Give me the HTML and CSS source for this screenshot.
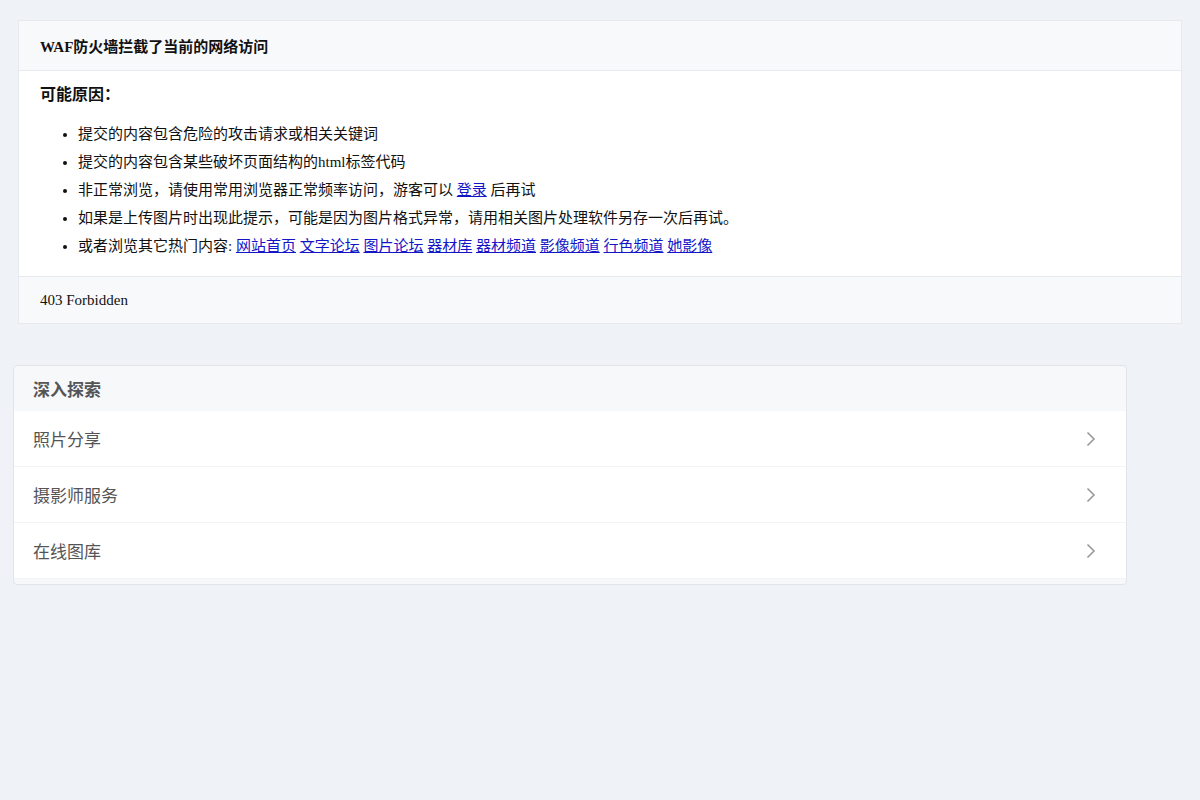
FILE: index.html
```html
<!DOCTYPE html>
<html>
<head>
  <meta charset="utf-8">
  <title>403 Forbidden</title>
  <link rel="stylesheet" href="styles.css">
</head>
<body>

  <!-- WAF block notice -->
  <div class="waf-card">
    <div class="waf-head">WAF防火墙拦截了当前的网络访问</div>
    <div class="waf-body">
      <p class="reason-title">可能原因：</p>
      <ul class="reasons">
        <li>提交的内容包含危险的攻击请求或相关关键词</li>
        <li>提交的内容包含某些破坏页面结构的html标签代码</li>
        <li>非正常浏览，请使用常用浏览器正常频率访问，游客可以 <a href="#">登录</a> 后再试</li>
        <li>如果是上传图片时出现此提示，可能是因为图片格式异常，请用相关图片处理软件另存一次后再试。</li>
        <li>或者浏览其它热门内容: <a href="#">网站首页</a> <a href="#">文字论坛</a> <a href="#">图片论坛</a> <a href="#">器材库</a> <a href="#">器材频道</a> <a href="#">影像频道</a> <a href="#">行色频道</a> <a href="#">她影像</a></li>
      </ul>
    </div>
    <div class="waf-foot">403 Forbidden</div>
  </div>

  <!-- explore links -->
  <div class="explore">
    <div class="explore-head">深入探索</div>
    <a class="explore-row" href="#">
      <span>照片分享</span>
      <svg class="chev" width="10" height="16" viewBox="0 0 10 16"><polyline points="1.5,1.5 8,8 1.5,14.5" fill="none" stroke="#999" stroke-width="1.6"/></svg>
    </a>
    <a class="explore-row" href="#">
      <span>摄影师服务</span>
      <svg class="chev" width="10" height="16" viewBox="0 0 10 16"><polyline points="1.5,1.5 8,8 1.5,14.5" fill="none" stroke="#999" stroke-width="1.6"/></svg>
    </a>
    <a class="explore-row" href="#">
      <span>在线图库</span>
      <svg class="chev" width="10" height="16" viewBox="0 0 10 16"><polyline points="1.5,1.5 8,8 1.5,14.5" fill="none" stroke="#999" stroke-width="1.6"/></svg>
    </a>
  </div>

</body>
</html>
```

FILE: styles.css
```css
body {
  margin: 0;
  padding: 20px 0 0;
  background-color: #eff3f8;
  font-family: "Liberation Serif", "Noto Sans CJK SC", serif;
  color: #111;
}

.waf-card {
  margin: 0 18px;
  background: #fff;
  border: 1px solid #e6e9ee;
}
.waf-head {
  height: 49px;
  padding: 0 21px;
  display: flex;
  align-items: center;
  background: #f8f9fb;
  border-bottom: 1px solid #e6e9ee;
  font-size: 15px;
  font-weight: bold;
}
.waf-body {
  padding: 12px 21px 16px;
}
.reason-title {
  margin: 0;
  line-height: 24px;
  font-size: 16px;
  font-weight: bold;
}
.reasons {
  margin: 13px 0 0;
  padding-left: 38px;
  font-size: 15px;
  line-height: 28px;
}
.reasons a {
  color: #1515c8;
}
.waf-foot {
  height: 46px;
  padding: 0 21px;
  display: flex;
  align-items: center;
  background: #f8f9fb;
  border-top: 1px solid #e6e9ee;
  font-size: 15px;
}

.explore {
  width: 1112px;
  margin: 41px 0 0 13px;
  padding-bottom: 5px;
  background: #f6f8fa;
  border: 1px solid #e1e5ea;
  border-radius: 4px;
  font-family: "Liberation Sans", "Noto Sans CJK SC", sans-serif;
  color: #555;
}
.explore-head {
  height: 45px;
  padding: 0 19px;
  display: flex;
  align-items: center;
  font-size: 17px;
  font-weight: bold;
}
.explore-row {
  height: 55px;
  padding: 0 30px 0 19px;
  display: flex;
  align-items: center;
  justify-content: space-between;
  background: #fff;
  border-bottom: 1px solid #f3f4f6;
  color: #555;
  text-decoration: none;
  font-size: 17px;
}
```
